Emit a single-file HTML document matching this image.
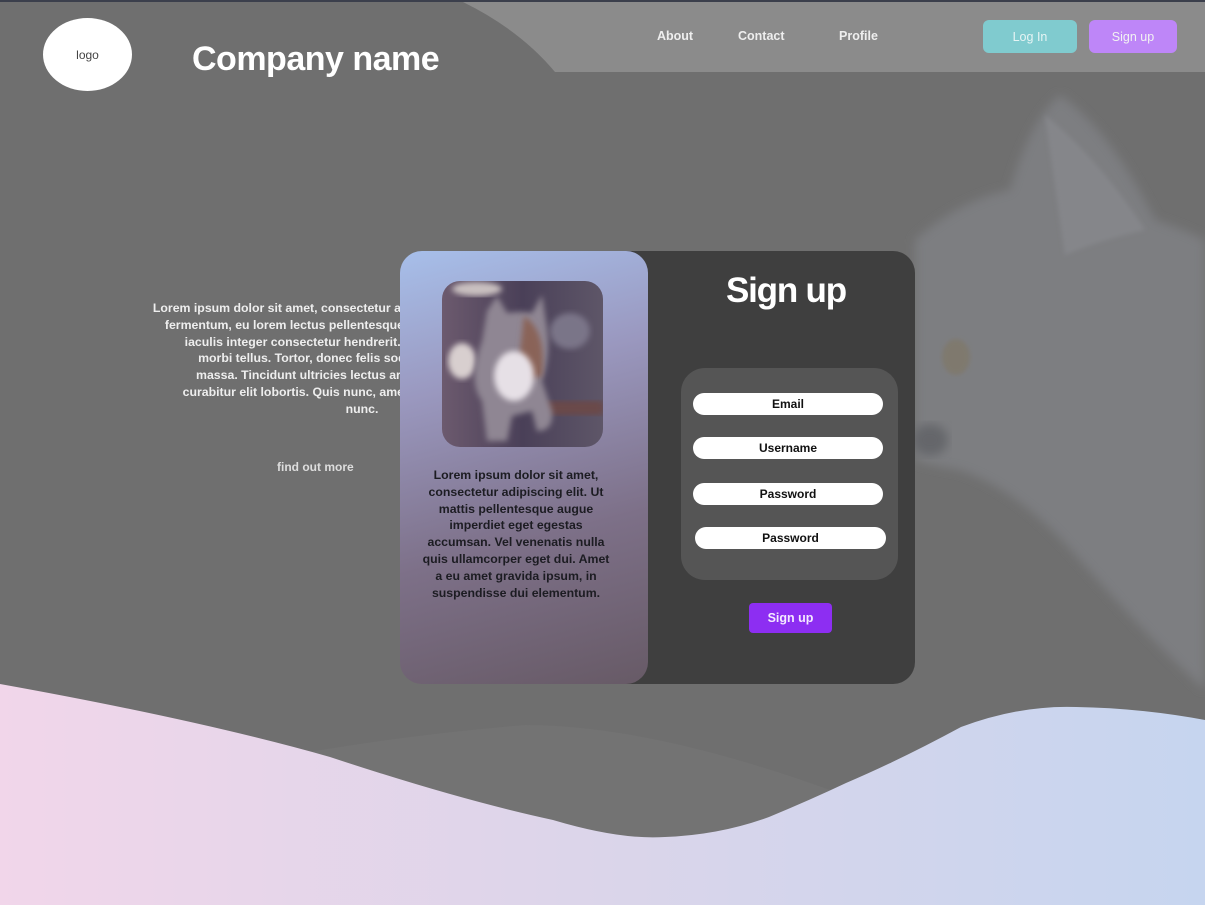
<!DOCTYPE html>
<html><head><meta charset="utf-8">
<style>
*{margin:0;padding:0;box-sizing:border-box}
html,body{width:1205px;height:905px;overflow:hidden;background:#6f6f6f;font-family:"Liberation Sans",sans-serif}
.abs{position:absolute}
.nav{position:absolute;top:29px;color:#eee;font-size:12.5px;font-weight:bold}
.btn{position:absolute;top:20px;height:33px;border-radius:6px;color:#f2f2f2;font-size:12.5px;display:flex;align-items:center;justify-content:center}
.inp{position:absolute;height:22px;border-radius:11px;background:#fff;color:#111;font-size:12px;font-weight:bold;display:flex;align-items:center;justify-content:center}
.lt{position:absolute;text-align:center;color:#eee;font-size:12.3px;font-weight:bold;line-height:16.8px;white-space:nowrap}
</style></head><body>
<svg class="abs" style="left:0;top:0" width="1205" height="905">
<defs>
<linearGradient id="wv" x1="0" y1="0" x2="1" y2="0"><stop offset="0" stop-color="#f1d6ea"/><stop offset="0.5" stop-color="#dbd5ea"/><stop offset="1" stop-color="#c6d5ef"/></linearGradient>
<filter id="bl"><feGaussianBlur stdDeviation="5"/></filter>
<filter id="bl2"><feGaussianBlur stdDeviation="2"/></filter>
</defs>
<rect x="0" y="0" width="1205" height="2" fill="#3b3f4c"/>
<path d="M463 2 L1205 2 L1205 72 L555 72 Q520 30 463 2Z" fill="#8b8b8b"/>
<g filter="url(#bl)">
<path d="M915 240 Q960 200 1010 190 Q1030 120 1060 95 Q1110 130 1155 220 Q1185 230 1205 240 L1205 690 Q1150 640 1080 560 Q1020 490 960 470 Q930 465 915 460Z" fill="#7d7e81"/>
</g>
<path d="M1045 115 Q1100 160 1145 230 Q1100 240 1065 255Z" fill="#85868a" filter="url(#bl2)"/>
<ellipse cx="956" cy="357" rx="14" ry="18" fill="#7f796e" filter="url(#bl2)"/>
<ellipse cx="930" cy="440" rx="18" ry="16" fill="#65666a" filter="url(#bl)"/>
<path d="M0 762 Q80 790 160 782 Q340 740 525 725 Q650 725 830 790 L830 905 L0 905Z" fill="#737373"/>
<path d="M0 684 Q200 720 330 757 Q460 800 553 820 Q620 840 665 837 Q720 835 769 817 Q810 800 846 783 Q900 760 961 727 Q1020 705 1076 707 Q1140 708 1205 720 L1205 905 L0 905Z" fill="url(#wv)"/>
</svg>

<div class="abs" style="left:43px;top:18px;width:89px;height:73px;border-radius:50%;background:#fff;display:flex;align-items:center;justify-content:center;font-size:12px;color:#444">logo</div>
<div class="abs" style="left:192px;top:40px;font-size:34px;font-weight:bold;color:#fff;letter-spacing:-0.5px">Company name</div>
<div class="nav" style="left:657px">About</div>
<div class="nav" style="left:738px">Contact</div>
<div class="nav" style="left:839px">Profile</div>
<div class="btn" style="left:983px;width:94px;background:#80cbcf;color:#e6f4f4">Log In</div>
<div class="btn" style="left:1089px;width:88px;background:#be86f8">Sign up</div>

<div class="lt" style="left:0;top:300px;width:724px">Lorem ipsum dolor sit amet, consectetur adipiscing elit. Nunc lorem vel<br>fermentum, eu lorem lectus pellentesque. Lectus nec pharetra vitae<br>iaculis integer consectetur hendrerit. Habitant arcu nulla sed<br>morbi tellus. Tortor, donec felis sodales risus nisl lectus<br>massa. Tincidunt ultricies lectus arcu id facilisis sit amet<br>curabitur elit lobortis. Quis nunc, amet vitae quis lectus dolor<br>nunc.</div>
<div class="abs" style="left:277px;top:460px;color:#ddd;font-size:12px;font-weight:bold">find out more</div>

<div class="abs" style="left:560px;top:251px;width:355px;height:433px;border-radius:22px;background:#3f3f3f"></div>
<div class="abs" style="left:400px;top:251px;width:248px;height:433px;border-radius:22px;background:linear-gradient(165deg,#a7bfea 0%,#9a98bf 30%,#7d7088 65%,#675a66 100%)"></div>
<div class="abs" style="left:442px;top:281px;width:161px;height:166px;border-radius:18px;overflow:hidden;background:linear-gradient(90deg,#6c5a6e,#4a4058 50%,#5e5668)">
<svg width="161" height="166">
<defs><filter id="b3"><feGaussianBlur stdDeviation="3"/></filter></defs>
<ellipse cx="35" cy="8" rx="25" ry="7" fill="#c9c0c0" filter="url(#b3)"/>
<ellipse cx="20" cy="80" rx="14" ry="18" fill="#d8cfcf" filter="url(#b3)"/>
<rect x="100" y="120" width="61" height="14" fill="#6a4a48" filter="url(#b3)"/>
<ellipse cx="128" cy="50" rx="20" ry="18" fill="#7a7488" filter="url(#b3)"/>
<path d="M45 30 L55 15 L65 32 Q80 30 90 32 L100 14 L104 40 Q110 70 100 100 L110 130 Q112 150 95 150 L90 130 L70 135 L65 160 L45 160 L40 120 Q25 100 40 60Z" fill="#8f8693" filter="url(#b3)"/>
<path d="M82 35 Q105 50 100 95 L75 100Z" fill="#8a6458" filter="url(#b3)"/>
<ellipse cx="72" cy="95" rx="20" ry="25" fill="#e6e0e6" filter="url(#b3)"/>
</svg></div>
<div class="abs" style="left:416px;top:467px;width:200px;text-align:center;color:#1c1c22;font-size:12.3px;font-weight:bold;line-height:16.8px;white-space:nowrap">Lorem ipsum dolor sit amet,<br>consectetur adipiscing elit. Ut<br>mattis pellentesque augue<br>imperdiet eget egestas<br>accumsan. Vel venenatis nulla<br>quis ullamcorper eget dui. Amet<br>a eu amet gravida ipsum, in<br>suspendisse dui elementum.</div>

<div class="abs" style="left:726px;top:271px;color:#fff;font-size:35px;font-weight:bold;letter-spacing:-1.2px">Sign up</div>
<div class="abs" style="left:681px;top:368px;width:217px;height:212px;border-radius:24px;background:#555"></div>
<div class="inp" style="left:693px;top:393px;width:190px">Email</div>
<div class="inp" style="left:693px;top:437px;width:190px">Username</div>
<div class="inp" style="left:693px;top:483px;width:190px">Password</div>
<div class="inp" style="left:695px;top:527px;width:191px">Password</div>
<div class="abs" style="left:749px;top:603px;width:83px;height:30px;border-radius:4px;background:#8d2ef2;color:#f4eaff;font-size:12.5px;font-weight:bold;display:flex;align-items:center;justify-content:center">Sign up</div>
</body></html>
